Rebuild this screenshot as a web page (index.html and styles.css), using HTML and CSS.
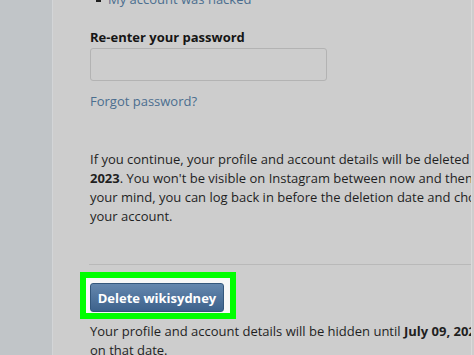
FILE: index.html
```html
<!DOCTYPE html>
<html>
<head>
<meta charset="utf-8">
<link rel="stylesheet" href="styles.css">
</head>
<body>
<div class="page">
  <aside class="sidebar"></aside>
  <main class="main">
    <ul class="reasons">
      <li class="reason"><a class="link">My account was hacked</a></li>
    </ul>
    <div class="label">Re-enter your password</div>
    <div class="input"></div>
    <a class="link forgot">Forgot password?</a>
    <p class="para">If you continue, your profile and account details will be deleted on <b>July 09,</b><br><b>2023</b>. You won't be visible on Instagram between now and then. If you change<br>your mind, you can log back in before the deletion date and choose to keep<br>your account.</p>
    <hr class="sep">
    <div class="highlight">
      <button class="btn">Delete wikisydney</button>
    </div>
    <p class="note">Your profile and account details will be hidden until <b>July 09, 2023</b> and deleted<br>on that date.</p>
  </main>
</div>
</body>
</html>
```
FILE: styles.css
```css
html, body {
  margin: 0;
  padding: 0;
  overflow: hidden;
}
body {
  width: 474px;
  height: 355px;
  background: #cdcdcd;
  font-family: "Open Sans", "Noto Sans", sans-serif;
  font-size: 13px;
  line-height: 19px;
  color: #1f1f1f;
}
.page {
  display: flex;
  height: 355px;
}
.sidebar {
  flex: 0 0 52px;
  background: #c1c5c8;
  border-right: 1px solid #d3d5d7;
}
.main {
  flex: 0 0 419px;
  border-right: 1px solid #dadada;
  padding-left: 37px;
  box-sizing: border-box;
  overflow: hidden;
  white-space: nowrap;
}
.reasons {
  list-style: none;
  margin: -10px 0 0 0;
  padding: 0 0 0 18px;
}
.reason {
  position: relative;
}
.reason::before {
  content: "";
  position: absolute;
  left: -12px;
  top: 7px;
  width: 5px;
  height: 5px;
  background: #1f1f1f;
}
.link {
  color: #4b6e8f;
  text-decoration: none;
}
.label {
  margin-top: 19px;
  font-weight: 700;
  color: #151515;
}
.input {
  margin-top: 1px;
  width: 237px;
  height: 33px;
  box-sizing: border-box;
  border: 1px solid #b3b3b3;
  border-radius: 3px;
}
.forgot {
  display: block;
  margin-top: 11px;
}
.para {
  margin: 39px 0 0 0;
}
.sep {
  margin: 38px 0 0 -1px;
  border: 0;
  height: 1px;
  background: #b9b9b9;
  width: 400px;
}
.highlight {
  margin: 7px 0 0 -10px;
  width: 156px;
  height: 47px;
  box-sizing: border-box;
  border: 6px solid #00ff00;
  background: #f7f7f7;
  padding: 5px 6px 1px 4px;
}
.btn {
  display: block;
  width: 134px;
  height: 29px;
  box-sizing: border-box;
  border: 1px solid #34577c;
  border-radius: 3px;
  background: linear-gradient(#6487ae, #3d628c);
  color: #ffffff;
  font-family: inherit;
  font-size: 13px;
  font-weight: 700;
  padding: 0;
}
.note {
  margin: 3px 0 0 0;
}
```
